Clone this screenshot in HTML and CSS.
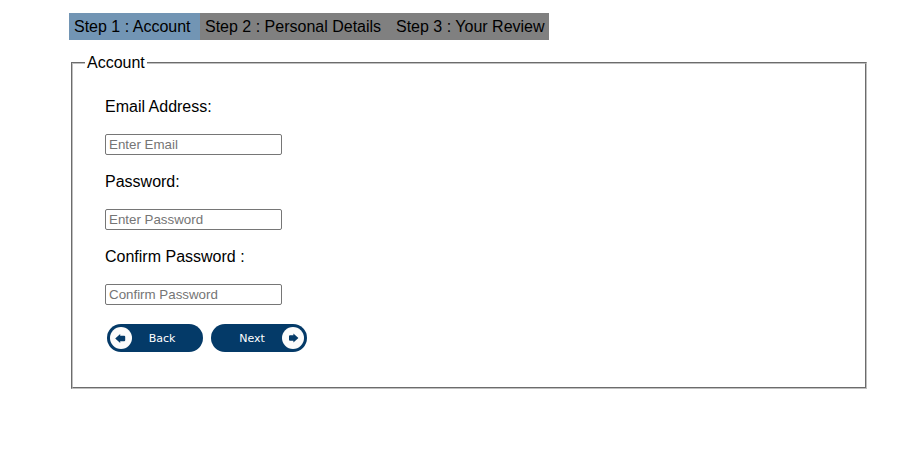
FILE: index.html
```html
<!DOCTYPE html>
<html lang="en">
<head>
<meta charset="utf-8">
<title>Registration</title>
<link rel="stylesheet" href="styles.css">
</head>
<body>
<div class="page">
  <ul class="steps">
    <li class="step active">Step 1 : Account</li>
    <li class="step details">Step 2 : Personal Details</li>
    <li class="step review">Step 3 : Your Review</li>
  </ul>
  <form>
    <fieldset class="panel">
      <legend>Account</legend>
      <label for="email">Email Address:</label>
      <input id="email" type="text" placeholder="Enter Email">
      <label for="password">Password:</label>
      <input id="password" type="password" placeholder="Enter Password">
      <label for="confirm">Confirm Password :</label>
      <input id="confirm" type="password" placeholder="Confirm Password">
      <div class="actions">
        <button type="button" class="nav back">
          <svg class="icon" viewBox="0 0 22 22"><circle cx="11" cy="11" r="11" fill="#fbfbfb"/><path d="M5.2 11.5l5-4.6v1.8h4q1 0 1 1v3.6q0 1-1 1h-4v1.8z"/></svg>
          <span>Back</span>
        </button>
        <button type="button" class="nav next">
          <span>Next</span>
          <svg class="icon" viewBox="0 0 22 22"><circle cx="11" cy="11" r="11" fill="#fbfbfb"/><path d="M16.4 11l-5-4.6v1.8h-3.4q-1 0-1 1v3.6q0 1 1 1h3.4v1.8z"/></svg>
        </button>
      </div>
    </fieldset>
  </form>
</div>
</body>
</html>
```
FILE: styles.css
```css
body {
  margin: 0;
  background: #fff;
  color: #000;
  font: 16px/18px "Liberation Sans", Arial, sans-serif;
}

.page {
  width: 798px;
  margin: 13px 0 0 69px;
}

.steps {
  display: flex;
  margin: 0;
  padding: 0;
  list-style: none;
}

.step {
  box-sizing: border-box;
  height: 27px;
  padding-left: 5px;
  background: #808080;
  line-height: 27px;
  white-space: nowrap;
}

.step.active {
  width: 131px;
  background: #7295b4;
}

.step.details {
  width: 191px;
}

.step.review {
  width: 158px;
}

.panel {
  box-sizing: border-box;
  width: 796px;
  height: 335px;
  margin: 14px 0 0 2px;
  padding: 26px 32px 0;
  border: 2px groove #c0c0c0;
}

.panel legend {
  margin-left: -20px;
  padding: 0 2px;
}

.panel label {
  display: block;
  height: 18px;
  margin-bottom: 18px;
}

.panel input {
  display: block;
  box-sizing: border-box;
  width: 177px;
  height: 21px;
  margin: 0 0 18px;
  padding: 1px 2px 1px 3px;
  border: 1px solid #767676;
  border-radius: 2px;
  font: 13.333px "Liberation Sans", Arial, sans-serif;
}

.panel input::placeholder {
  color: #757575;
}

.actions {
  display: flex;
  gap: 8px;
  margin: 19px 0 0 2px;
}

.nav {
  display: flex;
  align-items: center;
  width: 96px;
  height: 28px;
  padding: 0 3px;
  border: 0;
  border-radius: 14px;
  background: #043a68;
  color: #fff;
  font: 11px "DejaVu Sans", sans-serif;
}

.nav span {
  flex: 1;
  text-align: center;
}

.back span {
  padding-right: 8px;
}

.next span {
  padding-left: 8px;
}

.icon {
  width: 22px;
  height: 22px;
  fill: #043a68;
}
```
